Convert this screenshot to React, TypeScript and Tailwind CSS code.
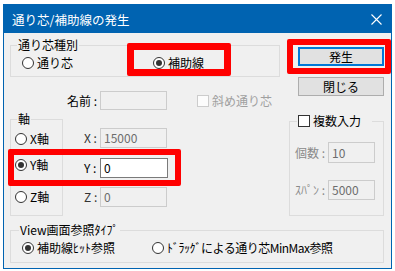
import React from 'react';

const Radio = ({ checked = false, label, className = '' }: { checked?: boolean; label: string; className?: string }) => (
  <div className={`flex items-center h-[14px] whitespace-nowrap ${className}`}>
    <span className="flex items-center justify-center w-[12px] h-[12px] shrink-0 rounded-full border border-[#333333] bg-white">
      {checked && <span className="w-[6px] h-[6px] rounded-full bg-[#333333]" />}
    </span>
    <span className="ml-[3px]">{label}</span>
  </div>
);

const Box = ({ value = '', active = false, className = '' }: { value?: string; active?: boolean; className?: string }) => (
  <div
    className={`flex items-center pl-[3px] border ${
      active ? 'border-[#7a7a7a] bg-white text-black' : 'border-[#cccccc] bg-[#f0f0f0] text-[#6d6d6d]'
    } ${className}`}
  >
    {value}
  </div>
);

export default function App() {
  return (
    <div className="w-[395px] h-[271px] bg-white pl-[3px] pt-[4px] text-[12px] leading-[14px] text-black font-['Noto_Sans_CJK_JP',sans-serif]">
      <div className="w-[389px] h-[265px] flex flex-col bg-[#0063b1] px-[1px] pb-[1px]">
        {/* Title bar */}
        <div className="h-[29px] shrink-0 flex items-center text-white pl-[8px]">
          <span className="text-[12.5px] mt-[3px]">通り芯/補助線の発生</span>
          <svg className="ml-auto mr-[9px] mt-[1px]" width="11" height="11" viewBox="0 0 11 11">
            <path d="M0.5 0.5 L10.5 10.5 M10.5 0.5 L0.5 10.5" stroke="white" strokeWidth="1.1" />
          </svg>
        </div>

        {/* Body */}
        <div className="relative flex-1 bg-[#f0f0f0] pl-[6px] pt-[5px]">
          <div className="flex">
            {/* Left column */}
            <div className="w-[270px]">
              <fieldset className="w-[270px] h-[39px] border border-[#dcdcdc]">
                <legend className="ml-[6px] px-[1px]">通り芯種別</legend>
                <div className="flex mt-[4px] ml-[11px]">
                  <Radio label="通り芯" className="w-[131px]" />
                  <Radio checked label="補助線" />
                </div>
              </fieldset>

              <div className="flex items-center mt-[14px] h-[19px]">
                <span className="ml-[57px] w-[30px] whitespace-nowrap">名前 :</span>
                <Box className="ml-[3px] w-[67px] h-[19px]" />
                <span className="ml-[30px] w-[12px] h-[12px] border border-[#cccccc] bg-[#fcfcfc]" />
                <span className="ml-[3px] text-[#a0a0a0]">斜め通り芯</span>
              </div>

              <div className="flex mt-[2px]">
                <fieldset className="w-[53px] h-[104px] border border-[#dcdcdc]">
                  <legend className="ml-[6px] px-[1px]">軸</legend>
                  <div className="pl-[4px]">
                    <Radio label="X軸" className="mt-[6px]" />
                    <Radio checked label="Y軸" className="mt-[12px]" />
                    <Radio label="Z軸" className="mt-[18px]" />
                  </div>
                </fieldset>

                <div className="ml-[21px]">
                  <div className="flex items-center mt-[16px] h-[20px]">
                    <span className="w-[16px] whitespace-nowrap text-[#333333]">X :</span>
                    <Box value="15000" className="w-[67px] h-[20px]" />
                  </div>
                  <div className="flex items-center mt-[10px] h-[20px]">
                    <span className="w-[16px] whitespace-nowrap">Y :</span>
                    <Box value="0" active className="w-[68px] h-[20px]" />
                  </div>
                  <div className="flex items-center mt-[9px] h-[20px]">
                    <span className="w-[16px] whitespace-nowrap text-[#333333]">Z :</span>
                    <Box value="0" className="w-[67px] h-[20px]" />
                  </div>
                </div>
              </div>
            </div>

            {/* Right column */}
            <div className="ml-[9px] w-[95px]">
              <button className="block mt-[9px] ml-[9px] w-[86px] h-[19px] border-2 border-[#0078d7] bg-[#e1e1e1] leading-[14px]">
                発生
              </button>
              <button className="block mt-[11px] ml-[9px] w-[86px] h-[19px] border border-[#adadad] bg-[#e1e1e1] leading-[14px]">
                閉じる
              </button>

              <fieldset className="mt-[18px] w-[95px] h-[102px] border border-[#dcdcdc]">
                <legend className="ml-[7px] pl-[1px] pr-[11px]">
                  <span className="flex items-center">
                    <span className="w-[12px] h-[12px] border border-[#333333] bg-white" />
                    <span className="ml-[3px]">複数入力</span>
                  </span>
                </legend>
                <div className="flex items-center mt-[14px] h-[21px]">
                  <span className="w-[35px] flex justify-end whitespace-nowrap text-[#8a8a8a]">個数 :</span>
                  <Box value="10" className="ml-[3px] w-[47px] h-[21px]" />
                </div>
                <div className="flex items-center mt-[17px] h-[20px]">
                  <span className="w-[35px] flex justify-end whitespace-nowrap text-[#8a8a8a]">ｽﾊﾟﾝ :</span>
                  <Box value="5000" className="ml-[3px] w-[47px] h-[20px]" />
                </div>
              </fieldset>
            </div>
          </div>

          <fieldset className="mt-[7px] w-[374px] h-[40px] border border-[#dcdcdc]">
            <legend className="ml-[8px] px-[1px]">View画面参照ﾀｲﾌﾟ</legend>
            <div className="flex mt-[4px] ml-[11px]">
              <Radio checked label="補助線ﾋｯﾄ参照" className="w-[130px]" />
              <Radio label="ﾄﾞﾗｯｸﾞによる通り芯MinMax参照" className="tracking-[-0.5px]" />
            </div>
          </fieldset>

          {/* Red annotation frames */}
          <div className="absolute left-[123px] top-[10px] w-[104px] h-[33px] border-[7px] border-[#ff0000] rounded-[2px]" />
          <div className="absolute left-[283px] top-[6px] w-[104px] h-[35px] border-[6px] border-[#ff0000] rounded-[2px]" />
          <div className="absolute left-[4px] top-[116px] w-[173px] h-[37px] border-[6px] border-[#ff0000] rounded-[2px]" />
        </div>
      </div>
    </div>
  );
}
